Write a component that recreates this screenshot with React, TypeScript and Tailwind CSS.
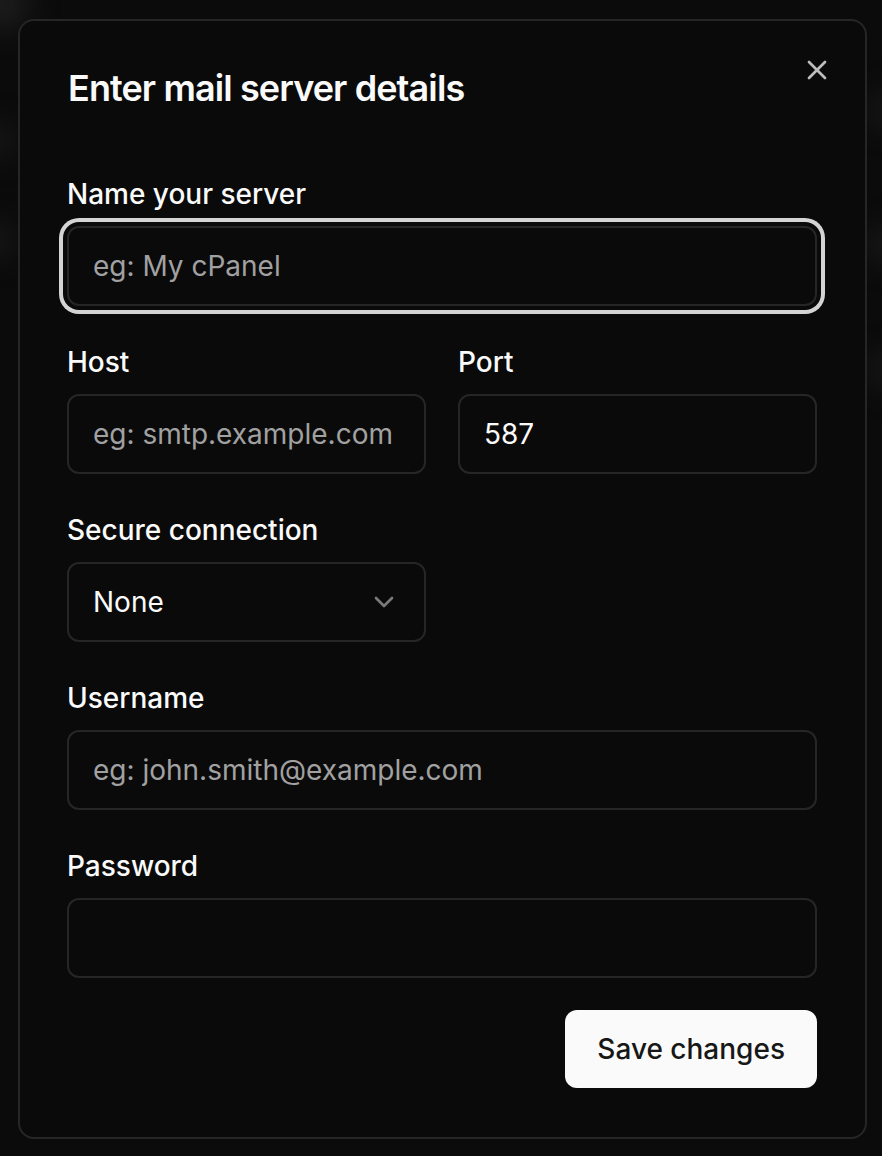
import React from "react";

function Field({ label, placeholder, value, focused }: { label: string; placeholder?: string; value?: string; focused?: boolean }) {
  return (
    <div className="flex flex-col">
      <label className="text-[28px] leading-[28px] font-medium text-[#fafafa] h-[28px]">{label}</label>
      <div
        className={
          "mt-[18px] h-[80px] rounded-[12px] border-2 border-[#262626] bg-[#0a0a0a] flex items-center px-[24px] text-[28px] " +
          (focused ? "shadow-[0_0_0_4px_#0a0a0a,0_0_0_8px_#d4d4d4]" : "")
        }
      >
        {value ? (
          <span className="text-[#fafafa]">{value}</span>
        ) : (
          <span className="text-[#a1a1a1]">{placeholder ?? ""}</span>
        )}
      </div>
    </div>
  );
}

export default function App() {
  return (
    <div
      className="relative w-[882px] h-[1156px] bg-[#0b0b0b] overflow-hidden"
      style={{ fontFamily: "Inter, 'Noto Sans', sans-serif" }}
    >
      <div className="absolute left-[-30px] top-[-20px] w-[60px] h-[50px] rounded-full bg-[#1c1c1c] blur-[14px]" />
      <div className="absolute left-[-30px] top-[120px] w-[50px] h-[40px] rounded-full bg-[#141414] blur-[12px]" />
      <div className="absolute left-[-30px] top-[220px] w-[50px] h-[40px] rounded-full bg-[#141414] blur-[12px]" />
      <div className="absolute right-[-30px] top-[90px] w-[50px] h-[40px] rounded-full bg-[#141414] blur-[12px]" />
      <div className="absolute right-[-30px] top-[225px] w-[50px] h-[40px] rounded-full bg-[#151515] blur-[12px]" />
      <div className="absolute right-[-30px] top-[350px] w-[50px] h-[40px] rounded-full bg-[#141414] blur-[12px]" />

      <div className="relative ml-[18px] mt-[19px] w-[849px] h-[1120px] rounded-[16px] border-2 border-[#262626] bg-[#0a0a0a] pl-[47px] pr-[48px] pt-[49px]">
        <button className="absolute right-[32px] top-[33px] w-[32px] h-[32px] flex items-center justify-center text-[#bdbdbd]">
          <svg width="32" height="32" viewBox="0 0 24 24" fill="none" stroke="currentColor" strokeWidth="2" strokeLinecap="round" strokeLinejoin="round">
            <path d="M18 6 6 18" />
            <path d="m6 6 12 12" />
          </svg>
        </button>

        <h2 className="text-[36px] leading-[36px] h-[36px] font-semibold tracking-[-0.9px] text-[#fafafa] ml-[1px]">
          Enter mail server details
        </h2>

        <div className="mt-[74px] flex flex-col gap-[42px]">
          <Field label="Name your server" placeholder="eg: My cPanel" focused />
          <div className="grid grid-cols-2 gap-[32px]">
            <Field label="Host" placeholder="eg: smtp.example.com" />
            <Field label="Port" value="587" />
          </div>
          <div className="grid grid-cols-2 gap-[32px]">
            <div className="flex flex-col">
              <label className="text-[28px] leading-[28px] font-medium text-[#fafafa] h-[28px]">Secure connection</label>
              <div className="mt-[18px] h-[80px] rounded-[12px] border-2 border-[#262626] flex items-center justify-between px-[24px] text-[28px] text-[#fafafa]">
                <span>None</span>
                <svg width="32" height="32" viewBox="0 0 24 24" fill="none" stroke="#7a7a7a" strokeWidth="2" strokeLinecap="round" strokeLinejoin="round">
                  <path d="m6 9 6 6 6-6" />
                </svg>
              </div>
            </div>
            <div />
          </div>
          <Field label="Username" placeholder="eg: john.smith@example.com" />
          <Field label="Password" />
        </div>

        <div className="mt-[32px] flex justify-end">
          <button className="h-[78px] px-[32px] rounded-[12px] bg-[#fafafa] text-[#171717] text-[28px] font-medium">
            Save changes
          </button>
        </div>
      </div>
    </div>
  );
}
